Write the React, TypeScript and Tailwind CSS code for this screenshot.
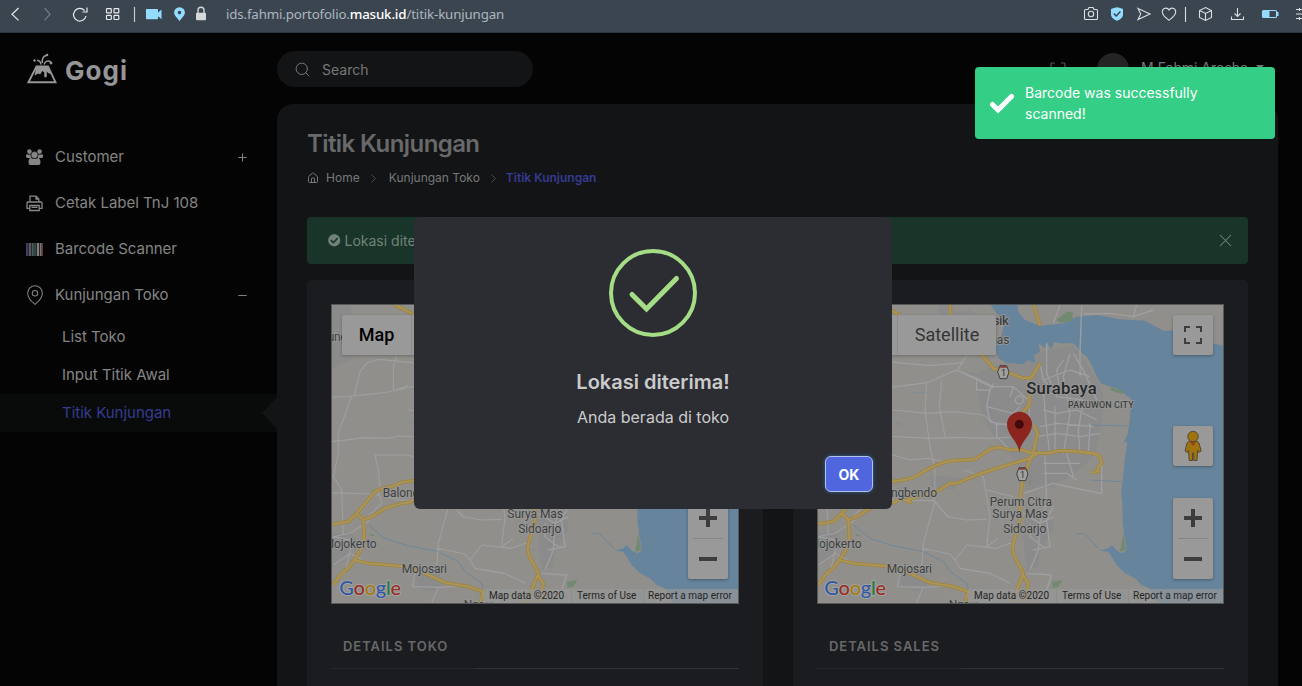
import React from "react";
import { FaCheckCircle } from "react-icons/fa";
import { ChevronRight, House, Plus, Minus, Search, MapPin, X } from "lucide-react";

function BrowserBar() {
  return (
    <div className="flex h-[33px] shrink-0 items-center border-b border-[#2b343d] bg-[#3a4550] pb-[4px] font-['Noto_Sans',sans-serif] text-[#e4e8eb]">
      <svg width="220" height="28" viewBox="0 0 220 28" fill="none" stroke="#e6eaec" strokeWidth="1.2">
        <path d="M18.5 8 12 14.2l6.500 6.200" />
        <path d="M44.500 8 50 14.200 44.500 20.400" stroke="#737d87" />
        <path d="M84.500 10.500A6.300 6.300 0 1 0 86 16M87 7.500v4.500h-4.500" />
        <rect x="106.500" y="8.700" width="4.800" height="4.200" rx=".7" />
        <rect x="114" y="8.700" width="4.800" height="4.200" rx=".7" />
        <rect x="106.500" y="15.300" width="4.800" height="4.200" rx=".7" />
        <rect x="114" y="15.300" width="4.800" height="4.200" rx=".7" />
        <path d="M134.500 7v15" stroke="#c3cace" />
        <g stroke="none" fill="#94dcff">
          <path d="M147 9h11.200q.8 0 .8.800v8.600q0 .8-.8.800h-10.400q-.8 0-.8-.8zM158 13.500l4.500-4v9.800l-4.500-4z" transform="translate(-1 0)" />
          <path d="M179.500 7.300a5.300 5.300 0 0 1 5.400 5.300c0 3.200-3.200 5.400-5.400 8.600-2.200-3.200-5.400-5.400-5.400-8.600a5.300 5.300 0 0 1 5.400-5.300zm0 3.500a1.800 1.800 0 1 0 0 3.600 1.800 1.800 0 0 0 0-3.600z" fillRule="evenodd" />
        </g>
        <rect x="190" y="12.500" width="10" height="7.500" rx="1" fill="#d4d8d8" stroke="none" transform="translate(6 .3)" />
        <path d="M198 13v-2.700a3 3 0 0 1 6 0V13" stroke="#d4d8d8" strokeWidth="1.400" />
      </svg>
      <div className="ml-[6px] flex-1 pt-px text-[13.300px] leading-none tracking-[-0.150px] text-[#adb6bf]">
        ids.fahmi.portofolio.<span className="font-medium text-white">masuk.id</span>/titik-kunjungan
      </div>
      <svg width="222" height="28" viewBox="1080 0 222 28" fill="none" stroke="#d9dee1" strokeWidth="1.100">
        <path d="M1084.500 10.500q0-1 1-1h2.500l1-2h4l1 2h2.500q1 0 1 1v8q0 1-1 1h-11q-1 0-1-1z" />
        <circle cx="1091" cy="14" r="2.700" />
        <path d="M1117 7.200c2.300.3 4.200.9 6 1.800v5.500c0 3-2.800 5-6 6.300-3.200-1.300-6-3.300-6-6.300V9c1.800-.9 3.700-1.500 6-1.800z" fill="#94dcff" stroke="none" />
        <path d="m1113.800 13.500 2.400 2.500 4.200-4.500" stroke="#3a4550" strokeWidth="1.500" />
        <path d="m1138 8.500 12 5.500-12 5.500 2.700-5.500z" />
        <path d="M1169 20.300c-3-2.200-6.700-4.800-6.700-8.500 0-3.900 5-5 6.700-1.700 1.700-3.300 6.700-2.200 6.700 1.700 0 3.700-3.700 6.300-6.700 8.500z" />
        <path d="M1185.500 7v15" />
        <path d="m1205.500 7.500 6 3v7l-6 3-6-3v-7zM1199.500 10.500l6 3 6-3M1205.500 13.500v7" />
        <path d="M1237.500 8v8.500m-3-3 3 3 3-3M1231.500 16.500v3h12v-3" />
        <rect x="1262.500" y="10.500" width="14" height="7" rx="1" stroke="#94dcff" />
        <path d="M1263 11h6.500v6.500h-6.500zM1277 12h1.500v4h-1.500z" fill="#94dcff" stroke="none" />
        <path d="M1296 9.500h6M1296 14h6M1296 18.500h6M1299.500 8v3M1299.500 17v3" />
      </svg>
    </div>
  );
}

function Logo() {
  return (
    <svg width="31" height="32" viewBox="0 0 31 32" fill="none" stroke="#969696" strokeWidth="1.500">
      <path d="M9.500 13.500h11.500l7.500 15.700H1.500z" strokeWidth="1.900" />
      <path d="M9.500 13H21l3 8-3-1-1.200-1.500v5q-1.300 1.700-2.600 0v-4.200l-2-1.300-2 3.500-2-1-3.700 2z" fill="#969696" stroke="none" />
      <path d="M14 11.500C13.500 8.500 12.200 7 10 7.500M15.300 10c-.3-4 .7-7 4-7.500M17.200 11.500c.5-3 3-4.500 6.500-3" />
      <circle cx="7.500" cy="7.500" r="1.200" fill="#969696" stroke="none" />
      <circle cx="20" cy="2" r="1.300" fill="#969696" stroke="none" />
      <circle cx="24" cy="10" r="1.400" fill="#969696" stroke="none" />
    </svg>
  );
}

function GroupIcon() {
  return (
    <svg width="17" height="16" viewBox="0 0 17 16" fill="#858585">
      <circle cx="3.400" cy="2.600" r="2.300" />
      <circle cx="13.600" cy="2.600" r="2.300" />
      <path d="M0 5.800q1.200-.8 2.200-.3 1.500.6 2.700-.2-.6 2.200.5 3.700H1.300Q0 8.500 0 7.500zM17 5.800q-1.200-.8-2.200-.3-1.500.6-2.700-.2.600 2.200-.5 3.700h4.100q1.300-.5 1.300-1.500z" />
      <circle cx="8.500" cy="6" r="3.400" stroke="#040404" strokeWidth=".4" />
      <path d="M2.500 13.500q0-4.500 2.500-4.500 3.500 2.200 7 0 2.500 0 2.500 4.500 0 2.500-2 2.500h-8q-2 0-2-2.500z" />
    </svg>
  );
}

function PrinterIcon() {
  return (
    <svg width="17" height="17" viewBox="0 0 17 17" fill="none" stroke="#888" strokeWidth="1.300">
      <path d="M4 7V1.200h6L12.800 4v3M10 1.200V4h2.800" />
      <path d="M3.500 13.300H1V8q0-1 1-1h13q1 0 1 1v5.300h-2.500" />
      <path d="M3.800 10.500h9.400v5H3.800zM5.500 12.300h6" />
    </svg>
  );
}

function BarcodeIcon() {
  return (
    <svg width="17" height="13" viewBox="0 0 17 13">
      <rect width="17" height="13" fill="#292929" />
      <path d="M.5 0h1v13h-1z" fill="#54549c" />
      <path d="M3 0h2v13H3z" fill="#605567" />
      <path d="M6 0h1.500v13H6zM8.500 0h1v13h-1z" fill="#42635c" />
      <path d="M11 0h2v13h-2z" fill="#817f81" />
      <path d="M14 0h1.500v13H14z" fill="#7b7871" />
      <path d="M16 0h1v13h-1z" fill="#693336" />
    </svg>
  );
}

function NavRow({ icon, label, sign }: { icon: React.ReactNode; label: string; sign?: React.ReactNode }) {
  return (
    <div className="flex h-[46px] items-center pl-[26px] pr-[28px]">
      <span className="flex w-[29px] shrink-0 items-center">{icon}</span>
      <span className="flex-1 whitespace-nowrap">{label}</span>
      {sign}
    </div>
  );
}

function Sidebar() {
  return (
    <aside className="flex w-[277px] shrink-0 flex-col text-[15px] tracking-[-0.020px] text-[#858585]">
      <div className="flex h-[101px] shrink-0 items-start gap-[7px] pl-[27px] pt-[20px] text-[#969696]">
        <Logo />
        <span className="pt-[2px] text-[26px] font-bold leading-[32px] tracking-[1px]">Gogi</span>
      </div>
      <NavRow icon={<GroupIcon />} label="Customer" sign={<Plus size={13} strokeWidth={1.800} />} />
      <NavRow icon={<PrinterIcon />} label="Cetak Label TnJ 108" />
      <NavRow icon={<BarcodeIcon />} label="Barcode Scanner" />
      <NavRow icon={<MapPin size={22} strokeWidth={1.100} className="-ml-[2px]" />} label="Kunjungan Toko" sign={<Minus size={13} strokeWidth={1.800} />} />
      <div className="flex h-[38px] items-center pl-[62px]">List Toko</div>
      <div className="flex h-[38px] items-center pl-[62px]">Input Titik Awal</div>
      <div className="flex h-[38px] items-center justify-between bg-[#090b0b] pl-[62px] text-[#353b91]">
        <span>Titik Kunjungan</span>
        <svg width="15" height="32" viewBox="0 0 15 32"><path d="M15 0 0 16l15 16z" fill="#131416" /></svg>
      </div>
    </aside>
  );
}

const majorRoads = [
  "M23 702 70 695 95 670 150 605Q175 592 200 590L230 577 267 572Q310 568 340 545L380 525Q405 514 430 512L495 508 545 475 570 472 600 480 625 478 660 487 710 490 750 482 810 485 860 492 870 500 875 520 862 535 865 545 845 547",
  "M115 690 140 680 180 655 230 640 255 637 270 625 302 637 290 630 340 615 380 605 420 580 440 580 500 555 560 535 610 520 660 505 690 485",
  "M95 670 115 690 118 745 105 785 88 810 70 835 50 850 24 885",
  "M88 810 130 820 225 828 300 850 360 878 430 890 475 905 465 942",
  "M672 405 683 430 670 485 640 560 628 640 632 680 620 730Q600 780 615 802L640 850 620 900 605 942",
  "M638 855 655 880 640 942",
  "M420 42 422 80M205 42 270 75M500 180 530 210 550 235 600 250 640 265 665 262 690 220M658 310 658 345 635 370 625 395M670 42 690 107",
];

const minorRoads =
  "M21 322 80 318 180 308 260 290 350 278 440 240 550 295 M88 317 105 245 125 220 160 208 230 215 360 227 460 218 M205 300 205 230 215 195 M80 318 40 430 40 490 25 560 50 600 55 735 M21 455 120 443 190 445 220 438 360 445 440 442 530 445 600 442 M150 495 160 540 165 590 M150 495 250 495 300 510 350 505 430 520 M470 195 440 245 M350 278 345 360 360 470 375 540 373 640 340 760 335 830 M395 275 388 350 405 440 M250 360 350 370 430 365 520 375 560 405 600 400 M21 608 140 612 230 630 370 632 415 680 470 690 530 688 M210 300 250 287 M375 635 415 682 M160 605 170 640 130 680 M460 540 520 560 540 680 530 770 565 745 M530 600 610 620 M435 810 470 765 560 775 600 760 620 770 M435 810 450 835 540 850 600 880 M335 775 420 792 435 810 M270 850 262 890 340 892 410 888 M320 940 340 890 M25 740 75 730 135 690 M25 825 75 790 130 820 M30 870 60 850 80 760";

const cityRoads =
  "M440 240 500 265 550 290 610 290 655 330 M500 265 500 300 540 300 550 280 M610 290 600 320 M540 300 530 350 540 395 590 405 620 390 M530 350 610 370 630 350 M600 480 560 440 560 400 M655 260 660 420 M690 220 700 270 720 290 M710 160 710 250 740 320 820 330 M760 210 740 240 750 310 M700 270 780 240 840 260 M780 190 760 260 780 370 760 490 M790 190 820 240 860 330 M700 310 770 310 850 300 M700 360 740 370 800 360 860 390 M690 410 740 400 850 410 M685 440 740 430 810 440 870 430 M700 300 710 420 720 490 M735 350 735 485 M820 330 805 420 810 490 M840 400 835 490 M875 510 875 610 820 600 730 580 640 610 M770 490 790 560 M700 520 810 520 M700 550 770 550 800 570 M705 490 710 640 690 700 685 780 660 840 M670 780 720 770 710 690 730 650 M640 670 690 700 730 680 M650 850 725 855 700 930 M660 700 660 740 700 770 M815 45 810 190 810 260 M730 100 750 45 M820 72 900 70 970 80 1030 60 M970 80 980 45 M24 740 75 750";

const water =
  "M540 42 560 70 585 90 575 135 558 175 565 205 590 218 640 222 655 210 675 220 672 195 690 185 686 160 705 175 710 158 725 178 732 156 750 160 790 160 805 175 812 185 830 200 845 225 860 260 875 282 920 295 955 320 972 338 962 358 958 405 952 435 925 490 945 455 952 460 944 510 938 575 933 610 937 640 938 700 950 780 938 790 922 783 905 765 895 775 870 782 895 785 905 800 920 825 945 850 975 865 995 885 1018 895 1045 942 1245 942 1245 168 1205 160 1130 120 1060 122 1005 92 930 88 860 75 800 80 760 100 690 107 645 90 625 65 622 42z";

interface Label { t: string; x: number; y: number; w: number; s?: number; bold?: boolean }
const labels: Label[] = [
  { t: "Balongbendo", x: 173, y: 621, w: 208 },
  { t: "Mojokerto", x: -4, y: 774, w: 159 },
  { t: "Mojosari", x: 230, y: 849, w: 136 },
  { t: "Perum Citra", x: 539, y: 648, w: 187 },
  { t: "Surya Mas", x: 547, y: 684, w: 167 },
  { t: "Sidoarjo", x: 580, y: 729, w: 129 },
  { t: "Ngoro", x: 416, y: 956, w: 93 },
  { t: "Gresik", x: 490, y: 104, w: 107, s: 40, bold: true },
  { t: "Kebomas", x: 451, y: 162, w: 147 },
  { t: "ung", x: 8, y: 154, w: 58 },
  { t: "Surabaya", x: 649, y: 311, w: 211, s: 50, bold: true },
  { t: "PAKUWON CITY", x: 774, y: 354, w: 197, s: 27, bold: true },
];

function RouteShield({ x, y }: { x: number; y: number }) {
  return (
    <g transform={`translate(${x} ${y})`}>
      <path d="M-17 0-10-19H10L17 0 10 20H-10z" fill="#a0a09c" stroke="#3f4143" strokeWidth="3" />
      <path d="M-9-18H9l2 5h-22z" fill="#893d3a" />
      <text x="-7" y="11" fontSize="27" fill="#303235">1</text>
    </g>
  );
}

function MapDrawing({ shift }: { shift: number }) {
  return (
    <svg className="block shrink-0" width="406" height="298" viewBox={`${24 - shift * 3} 45 1218 894`} fontFamily="Roboto, sans-serif">
      <rect x="15" y="40" width="1235" height="910" fill="#918f8b" />
      <g fill="#8b8b8c">
        <path d="M15 42H75L90 110 60 190 85 205 15 240z" />
        <path d="M15 730 75 725 100 755 60 800 15 840z" />
        <path d="M270 850 330 840 360 875 330 905 280 895z" />
        <path d="M500 250 600 210 690 185 790 165 850 250 880 310 875 400 855 490 820 530 730 590 650 600 615 510 560 450 520 390 500 300z" />
        <path d="M645 640 690 690 725 670 730 720 690 780 685 830 650 840 640 740z" />
        <path d="M395 70 480 60 500 75H390zM345 110h50v70h-50zM360 555 460 565 430 600 365 590zM390 45h40v30h-45z" />
        <path d="M440 240 500 250 500 275z" />
      </g>
      <path d={water} fill="#66849b" />
      <path d="M920 490 928 465 950 455 938 510 935 570z" fill="#918f8b" />
      <g fill="#738a72">
        <path d="M738 90 770 65 788 65 788 92 750 98z" />
        <path d="M900 290 940 302 935 312 905 302zM940 730 948 780 930 785zM726 875 758 870 745 890 728 895zM655 575 665 570 660 585zM135 730l15 7-12 2z" />
      </g>
      <g fill="none" stroke="#6d8799" strokeWidth="3" strokeLinejoin="round">
        <path d="M130 705 180 745 240 765 340 785 400 815 420 845 470 880 475 900M798 730 825 732 870 780M845 405 955 408M840 570 938 575M905 935 940 905 952 938" />
        <path d="M300 310l60-5M250 395l30 10" opacity=".5" />
      </g>
      <g fill="none" stroke="#9f9fa1" strokeLinejoin="round">
        <path d={minorRoads} strokeWidth="3.300" />
        <path d={cityRoads} strokeWidth="4" />
        <circle cx="628" cy="330" r="12" strokeWidth="4" />
      </g>
      <g fill="none" strokeLinejoin="round">
        {majorRoads.map((d) => <path key={d} d={d} stroke="#a1863d" strokeWidth="11" />)}
        {majorRoads.map((d) => <path key={d} d={d} stroke="#aa955c" strokeWidth="5.500" />)}
      </g>
      <g fill="#3d3f41" stroke="#989896" strokeWidth="5" paintOrder="stroke" strokeLinejoin="round">
        {labels.map((l) => (
          <text key={l.t} x={l.x} y={l.y} fontSize={l.s ?? 36} fontWeight={l.bold ? 500 : 400} textLength={l.w} fill={l.t === "Surabaya" ? "#26282b" : undefined}>
            {l.t}
          </text>
        ))}
      </g>
      <RouteShield x={580} y={246} />
      <RouteShield x={637} y={552} />
      <path d="M628 488c-5-38-37-51-37-86a37 36 0 0 1 75 0c0 35-33 48-38 86z" fill="#8d251f" />
      <circle cx="628" cy="403" r="13.500" fill="#42090a" />
      <g fontSize="60" fontFamily="Lato, sans-serif" fontWeight="500" stroke="#a8a7a4" strokeWidth="5" paintOrder="stroke">
        <text y="916" textLength="185" x="43">
          <tspan fill="#3058a5">G</tspan><tspan fill="#982e27">o</tspan><tspan fill="#a27b10">o</tspan><tspan fill="#3058a5">g</tspan><tspan fill="#277642">l</tspan><tspan fill="#982e27">e</tspan>
        </text>
      </g>
    </svg>
  );
}

function Pegman() {
  return (
    <svg width="18" height="32" viewBox="0 0 18 32" fill="#a0730f" stroke="#554b35" strokeWidth="1">
      <path d="M5 11h8l2 2 2.200 8-2.500 1.500-1-2.500L13 30.500H9.700V23H8.500v7.500H5.200L4.500 20l-1 2.500L1 21l2-8z" />
      <path d="m5 11 4 5 4-5z" fill="#944421" stroke="none" />
      <circle cx="9" cy="6.500" r="5.200" />
    </svg>
  );
}

function GoogleMap({ shift }: { shift: number }) {
  return (
    <div className="relative h-[300px] w-full overflow-hidden border border-[#57585a] font-['Roboto',sans-serif]">
      <MapDrawing shift={shift} />
      <div className="absolute left-[10px] top-[10px] flex h-[40px] text-[18px] shadow-[0_1px_3px_rgba(0,0,0,0.250)]">
        <div className="flex w-[69px] items-center justify-center rounded-l-[2px] bg-[#999] pb-px font-medium text-black">Map</div>
        <div className="flex w-[99px] items-center justify-center rounded-r-[2px] border-l border-[#8c8c8c] bg-[#999] pb-px text-[#353535]">Satellite</div>
      </div>
      <div className="absolute right-[10px] top-[10px] flex size-[40px] items-center justify-center rounded-[2px] bg-[#999] shadow-[0_1px_3px_rgba(0,0,0,0.300)]">
        <svg width="18" height="18" viewBox="0 0 18 18" fill="none" stroke="#3d3d3d" strokeWidth="2"><path d="M1 6V1h5M12 1h5v5M17 12v5h-5M6 17H1v-5" /></svg>
      </div>
      <div className="absolute right-[10px] top-[121px] flex size-[40px] items-center justify-center rounded-[2px] bg-[#999] shadow-[0_1px_3px_rgba(0,0,0,0.300)]"><Pegman /></div>
      <div className="absolute right-[10px] top-[193px] flex h-[81px] w-[40px] flex-col items-center rounded-[2px] bg-[#999] shadow-[0_1px_3px_rgba(0,0,0,0.300)]">
        <svg width="18" height="40" viewBox="0 0 18 40" stroke="#3d3d3d" strokeWidth="4"><path d="M0 20h18M9 11v18" /></svg>
        <div className="h-px w-[30px] bg-[#858585]" />
        <svg width="18" height="40" viewBox="0 0 18 40" stroke="#3d3d3d" strokeWidth="4"><path d="M0 20h18" /></svg>
      </div>
      <div className="absolute bottom-0 right-0 flex h-[14px] items-center bg-[#979797]/70 text-[10px] leading-[14px] tracking-[0.020px] text-[#252525]">
        <span className="w-[88px] whitespace-nowrap pl-[6px]">Map data ©2020</span>
        <span className="w-[72px] whitespace-nowrap border-l border-[#888]/60 pl-[5px]">Terms of Use</span>
        <span className="w-[95px] whitespace-nowrap border-l border-[#888]/60 pl-[4px]">Report a map error</span>
      </div>
    </div>
  );
}

function MapCard({ title, wide }: { title: string; wide?: boolean }) {
  return (
    <section className={`flex shrink-0 flex-col rounded-t-[5px] bg-[#1b1c20] px-[24px] pt-[24px] ${wide ? "w-[456px]" : "w-[455px]"}`}>
      <GoogleMap shift={wide ? 1 : 0} />
      <h2 className="mt-[32px] pl-[12px] text-[13px] font-semibold leading-[20px] tracking-[0.970px] text-[#676869]">{title}</h2>
      <div className="mt-[12px] flex h-px w-full">
        <div className="w-[144px] bg-[#27282b]" />
        <div className="flex-1 bg-[#313237]" />
      </div>
    </section>
  );
}

function TopBar() {
  return (
    <div className="flex h-[71px] shrink-0 items-start pt-[18px] text-[#777]">
      <div className="flex h-[36px] w-[256px] items-center gap-[11px] rounded-full bg-[#131416] pl-[17px] pt-px text-[14px]">
        <Search size={17} strokeWidth={1.400} />
        <span>Search</span>
      </div>
      <svg className="ml-[517px] mt-[11px]" width="16" height="16" viewBox="0 0 16 16" fill="none" stroke="#555" strokeWidth="1.200"><path d="M1 5V2q0-1 1-1h3M11 1h3q1 0 1 1v3M15 11v3q0 1-1 1h-3M5 15H2q-1 0-1-1v-3" /></svg>
      <div className="ml-[31px] mt-[2px] size-[32px] rounded-full bg-[#242424]" />
      <div className="ml-[12px] mt-[7px] flex items-center gap-[8px] whitespace-nowrap text-[14px] leading-[20px]">
        M.Fahmi Arosha
        <svg className="-mt-[2px]" width="8" height="5" viewBox="0 0 8 5" fill="#777"><path d="M0 0h8L4 4z" /></svg>
      </div>
    </div>
  );
}

function Content() {
  return (
    <main className="flex w-[1001px] flex-1 flex-col rounded-t-[16px] bg-[#131416] pl-[30px] text-[#68696a]">
      <h1 className="mt-[24px] text-[24px] font-semibold leading-[32px] tracking-[-0.580px]">Titik Kunjungan</h1>
      <nav className="mt-[4px] flex h-[28px] items-center whitespace-nowrap text-[12px] text-[#77787a]">
        <House size={12} strokeWidth={2} className="mr-[7px]" />
        <span className="tracking-[0.050px]">Home</span>
        <ChevronRight size={15} strokeWidth={1.500} className="ml-[6px] mr-[8px] text-[#505153]" />
        <span>Kunjungan Toko</span>
        <ChevronRight size={15} strokeWidth={1.500} className="ml-[6px] mr-[5px] text-[#505153]" />
        <span className="font-semibold text-[#353b91]">Titik Kunjungan</span>
      </nav>
      <div className="mt-[25px] flex h-[47px] w-[941px] shrink-0 items-center gap-[4px] rounded-[4px] bg-[#193529] pl-[21px] pr-[12px] text-[14px] text-[#728279]">
        <FaCheckCircle size={12.500} />
        <span className="flex-1">Lokasi diterima!</span>
        <X size={21} strokeWidth={1.200} />
      </div>
      <div className="mt-[16px] flex flex-1 gap-[30px]">
        <MapCard title="DETAILS TOKO" wide />
        <MapCard title="DETAILS SALES" />
      </div>
    </main>
  );
}

function Modal() {
  return (
    <div className="absolute left-[414px] top-[217px] flex h-[292px] w-[478px] flex-col items-center rounded-[6px] bg-[#2c2d33] text-[#cbcbcc]">
      <svg className="mt-[32px] shrink-0" width="88" height="88" viewBox="0 0 88 88" fill="none" stroke="#a5dc86">
        <circle cx="44" cy="44" r="42" strokeWidth="4" />
        <path d="m23 45.500 14.500 14.500 30-30.500" strokeWidth="5" strokeLinecap="round" />
      </svg>
      <h2 className="mt-[30px] text-[20px] font-semibold leading-[30px]">Lokasi diterima!</h2>
      <p className="mt-[8px] text-[16px] leading-[24px]">Anda berada di toko</p>
      <button className="mr-[19px] mt-[27px] flex h-[36px] w-[48px] items-center justify-center self-end rounded-[6px] border-[1.500px] border-[#b4c0ee] bg-[#4f66df] text-[14px] font-bold text-white shadow-[0_0_3px_1px_rgba(43,114,165,0.500)]">OK</button>
    </div>
  );
}

function Toast() {
  return (
    <div className="absolute left-[975px] top-[67px] flex h-[72px] w-[300px] items-center gap-[11px] rounded-[4px] bg-[#34ce86] pl-[15px] text-[14px] leading-[21px] text-white">
      <svg width="24" height="24" viewBox="0 0 24 24" fill="none" stroke="#fff" strokeWidth="5"><path d="m2.500 13.500 5.500 5.500L21.500 5.500" strokeLinecap="round" /></svg>
      <p>Barcode was successfully<br />scanned!</p>
    </div>
  );
}

export default function App() {
  return (
    <div className="relative flex h-[686px] w-[1302px] flex-col overflow-hidden bg-[#040404] font-['Inter',sans-serif]">
      <BrowserBar />
      <div className="flex min-h-0 flex-1">
        <Sidebar />
        <div className="flex flex-1 flex-col">
          <TopBar />
          <Content />
        </div>
      </div>
      <Modal />
      <Toast />
    </div>
  );
}
